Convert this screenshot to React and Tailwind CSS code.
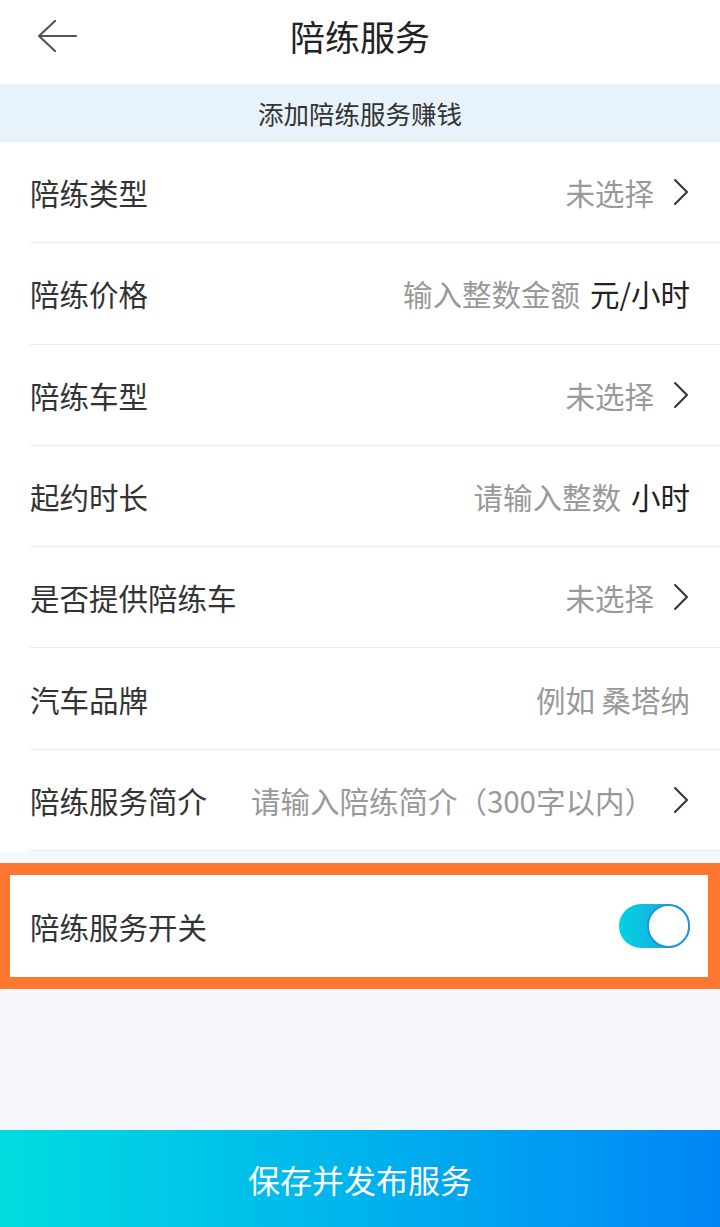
import React from "react"

const font = { fontFamily: '"Noto Sans CJK SC", "Noto Sans", sans-serif' }

function Chevron() {
  return (
    <svg width="18" height="28" viewBox="0 0 18 28" fill="none" className="ml-[18px]">
      <path d="M3 2 L15 14 L3 26" stroke="#333" strokeWidth="2" strokeLinecap="round" strokeLinejoin="round" />
    </svg>
  )
}

function Row({ label, children }) {
  return (
    <div className="pl-[30px] bg-white">
      <div className="h-[101.3px] flex items-center justify-between border-b border-[#ececec] pr-[30px]">
        <span className="text-[29.5px] text-[#333]">{label}</span>
        <div className="flex items-center text-[29.5px]">{children}</div>
      </div>
    </div>
  )
}

const rows = [
  { label: "陪练类型", placeholder: "未选择", arrow: true },
  { label: "陪练价格", placeholder: "输入整数金额", unit: "元/小时" },
  { label: "陪练车型", placeholder: "未选择", arrow: true },
  { label: "起约时长", placeholder: "请输入整数", unit: "小时" },
  { label: "是否提供陪练车", placeholder: "未选择", arrow: true },
  { label: "汽车品牌", placeholder: "例如 桑塔纳" },
  { label: "陪练服务简介", placeholder: "请输入陪练简介（300字以内）", arrow: true }
]

export default function App() {
  return (
    <div className="w-[720px] h-[1227px] flex flex-col bg-[#f6f8fb]" style={font}>
      <div className="h-[84px] bg-white flex items-center relative pb-[12px]">
        <svg width="40" height="34" viewBox="0 0 40 34" fill="none" className="absolute left-[37px] top-[19px]">
          <path d="M39 17 H2 M18 2 L2 17 L18 32" stroke="#555" strokeWidth="2.2" strokeLinecap="round" strokeLinejoin="round" />
        </svg>
        <div className="w-full text-center text-[35px] text-[#222]">陪练服务</div>
      </div>
      <div className="h-[58px] bg-[#e8f2fb] flex items-center justify-center text-[25.5px] text-[#333]">
        添加陪练服务赚钱
      </div>
      {rows.map((r) => (
        <Row key={r.label} label={r.label}>
          <span className="text-[#999]">{r.placeholder}</span>
          {r.unit && <span className="text-[#222] ml-[10px]">{r.unit}</span>}
          {r.arrow && <Chevron />}
        </Row>
      ))}
      <div className="mt-[12px] h-[126px] bg-white border-t-[12px] border-b-[12px] border-l-[10px] border-r-[12px] border-[#fd7730] flex items-center justify-between pl-[20px] pr-[18px]">
        <span className="text-[29.5px] text-[#333]">陪练服务开关</span>
        <div className="w-[71px] h-[44px] rounded-full bg-gradient-to-r from-[#00d4e0] to-[#2196e0] flex items-center justify-end">
          <div className="w-[43px] h-[44px] rounded-full bg-white border-[2px] border-[#2196e0]" />
        </div>
      </div>
      <div className="mt-auto h-[97px] bg-gradient-to-r from-[#00dcdf] to-[#0085f6] flex items-center justify-center text-[32px] text-white">
        保存并发布服务
      </div>
    </div>
  )
}
